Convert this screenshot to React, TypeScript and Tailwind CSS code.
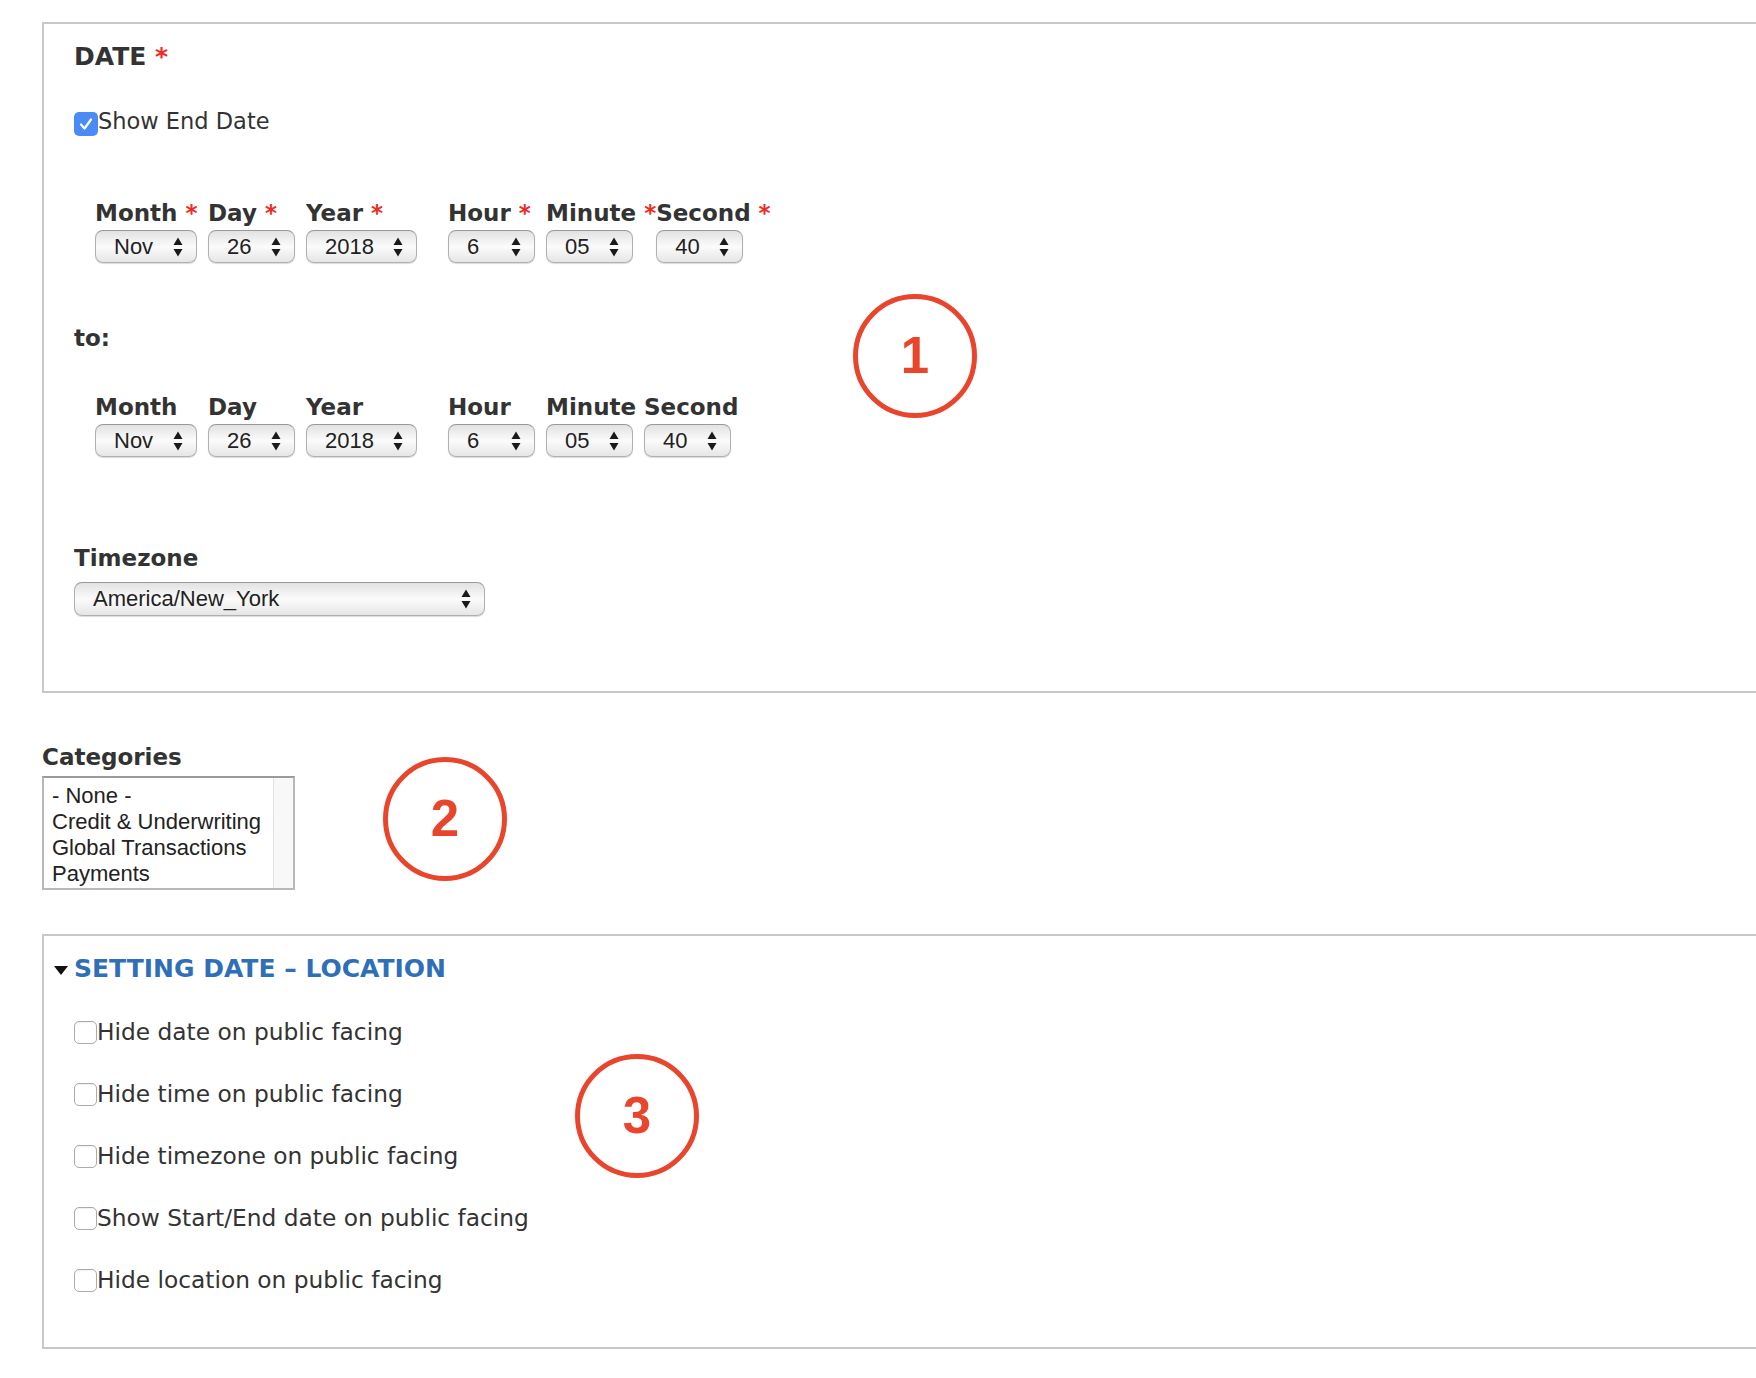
import React from "react";

const RED = "text-[#ee2a24]";

function Arrows() {
  return (
    <svg width="10" height="20" viewBox="0 0 10 20" className="absolute right-[13px] top-1/2 -translate-y-1/2">
      <polygon points="0.5,8 5,0.5 9.5,8" fill="#1a1a1a" />
      <polygon points="0.5,12 5,19.5 9.5,12" fill="#1a1a1a" />
    </svg>
  );
}

function Sel({ value, className }: { value: string; className: string }) {
  return (
    <div
      className={
        "relative flex shrink-0 items-center rounded-[8px] border border-[#b0b0b0] border-t-[#999] bg-linear-to-b from-[#e2e2e2] via-[#fbfbfb] to-[#e6e6e6] pl-[18px] font-['Liberation_Sans',Arial,sans-serif] text-[22px] leading-none text-[#222] shadow-[0_1px_1px_rgba(0,0,0,0.14)] " +
        className
      }
    >
      <span>{value}</span>
      <Arrows />
    </div>
  );
}

function Item({
  label,
  req,
  value,
  w,
}: {
  label: string;
  req?: boolean;
  value: string;
  w: string;
}) {
  return (
    <div className="flex flex-col items-start">
      <div className="h-[28px] whitespace-nowrap text-[23px] font-bold leading-[28px] text-[#333]">
        {label}
        {req && <span className={RED}> *</span>}
      </div>
      <Sel value={value} className={"mt-[3px] mr-[11px] h-[33px] " + w} />
    </div>
  );
}

function DateRow({ req }: { req?: boolean }) {
  return (
    <div className="ml-[21px] flex items-start">
      <div className="flex items-start">
        <Item label="Month" req={req} value="Nov" w="w-[102px]" />
        <Item label="Day" req={req} value="26" w="w-[87px]" />
        <Item label="Year" req={req} value="2018" w="w-[111px]" />
      </div>
      <div className="ml-[20px] flex items-start">
        <Item label="Hour" req={req} value="6" w="w-[87px]" />
        <Item label="Minute" req={req} value="05" w="w-[87px]" />
        <Item label="Second" req={req} value="40" w="w-[87px]" />
      </div>
    </div>
  );
}

function Checkbox({ checked }: { checked?: boolean }) {
  if (checked) {
    return (
      <div className="mt-[5px] flex h-[24px] w-[24px] shrink-0 items-center justify-center rounded-[5px] bg-[#4b8bf5]">
        <svg width="16" height="16" viewBox="0 0 16 16">
          <path d="M3 8.5 L6.5 12.5 L13 3.5" stroke="#fff" strokeWidth="2.2" fill="none" strokeLinecap="round" strokeLinejoin="round" />
        </svg>
      </div>
    );
  }
  return (
    <div className="mt-[3px] h-[23px] w-[23px] shrink-0 rounded-[5px] border border-[#ababab] bg-white shadow-[inset_0_1px_1px_rgba(0,0,0,0.06)]" />
  );
}

function CheckRow({
  label,
  checked,
  className,
  size,
}: {
  label: string;
  checked?: boolean;
  className?: string;
  size: string;
}) {
  return (
    <div className={"flex items-start " + (className ?? "")}>
      <Checkbox checked={checked} />
      <span className={"h-[28px] whitespace-nowrap leading-[28px] text-[#333] " + size}>{label}</span>
    </div>
  );
}

function Circle({ n, className }: { n: string; className: string }) {
  return (
    <div
      className={
        "absolute flex h-[124px] w-[124px] items-center justify-center rounded-full border-[5px] border-[#e8452c] font-['Liberation_Sans',Arial,sans-serif] text-[51px] font-bold text-[#e8452c] " +
        className
      }
    >
      {n}
    </div>
  );
}

export default function App() {
  return (
    <div className="relative min-h-[1378px] w-full overflow-hidden bg-white font-['DejaVu_Sans',sans-serif] text-[#333]">
      <div className="pl-[42px] pt-[22px]">
        {/* DATE fieldset */}
        <div className="border-2 border-r-0 border-[#c8c8c8] pb-[75px] pl-[30px] pt-[18px]">
          <div className="h-[30px] text-[25px] font-bold leading-[30px] text-[#333]">
            DATE <span className={RED}>*</span>
          </div>
          <CheckRow label="Show End Date" checked className="mt-[35px]" size="text-[22.5px]" />

          <div className="mt-[63px]">
            <DateRow req />
          </div>

          <div className="mt-[61px] h-[28px] text-[23px] font-bold leading-[28px]">to:</div>

          <div className="mt-[41px]">
            <DateRow />
          </div>

          <div className="mt-[87px] h-[28px] text-[23px] font-bold leading-[28px]">Timezone</div>
          <Sel value="America/New_York" className="mt-[10px] h-[34px] w-[411px]" />
        </div>

        {/* Categories */}
        <div className="mt-[50px] h-[28px] text-[23px] font-bold leading-[28px]">Categories</div>
        <div className="mt-[5px] flex h-[114px] w-[253px] border-2 border-[#b8b8b8] border-t-[#9a9a9a] bg-white">
          <div className="flex-1 pl-[8px] pt-[5px] font-['Liberation_Sans',Arial,sans-serif] text-[22px] leading-[26px] text-[#222]">
            <div>- None -</div>
            <div className="whitespace-nowrap">Credit &amp; Underwriting</div>
            <div>Global Transactions</div>
            <div>Payments</div>
          </div>
          <div className="w-[20px] border-l border-[#e3e3e3] bg-[#f8f8f8]" />
        </div>

        {/* Setting date - location */}
        <div className="mt-[44px] border-2 border-r-0 border-[#c8c8c8] pb-[53px] pl-[30px] pt-[18px]">
          <div className="relative flex h-[30px] items-center">
            <svg width="14" height="9" viewBox="0 0 14 9" className="absolute left-[-20px] top-[12px]">
              <polygon points="0,0 14,0 7,9" fill="#111" />
            </svg>
            <span className="text-[25px] font-bold leading-[30px] text-[#2f6fb8]">SETTING DATE – LOCATION</span>
          </div>
          <div className="mt-[34px] flex flex-col gap-[34px]">
            <CheckRow label="Hide date on public facing" size="text-[23.3px]" />
            <CheckRow label="Hide time on public facing" size="text-[23.3px]" />
            <CheckRow label="Hide timezone on public facing" size="text-[23.3px]" />
            <CheckRow label="Show Start/End date on public facing" size="text-[23.3px]" />
            <CheckRow label="Hide location on public facing" size="text-[23.3px]" />
          </div>
        </div>
      </div>

      <Circle n="1" className="left-[853px] top-[294px]" />
      <Circle n="2" className="left-[383px] top-[757px]" />
      <Circle n="3" className="left-[575px] top-[1054px]" />
    </div>
  );
}
